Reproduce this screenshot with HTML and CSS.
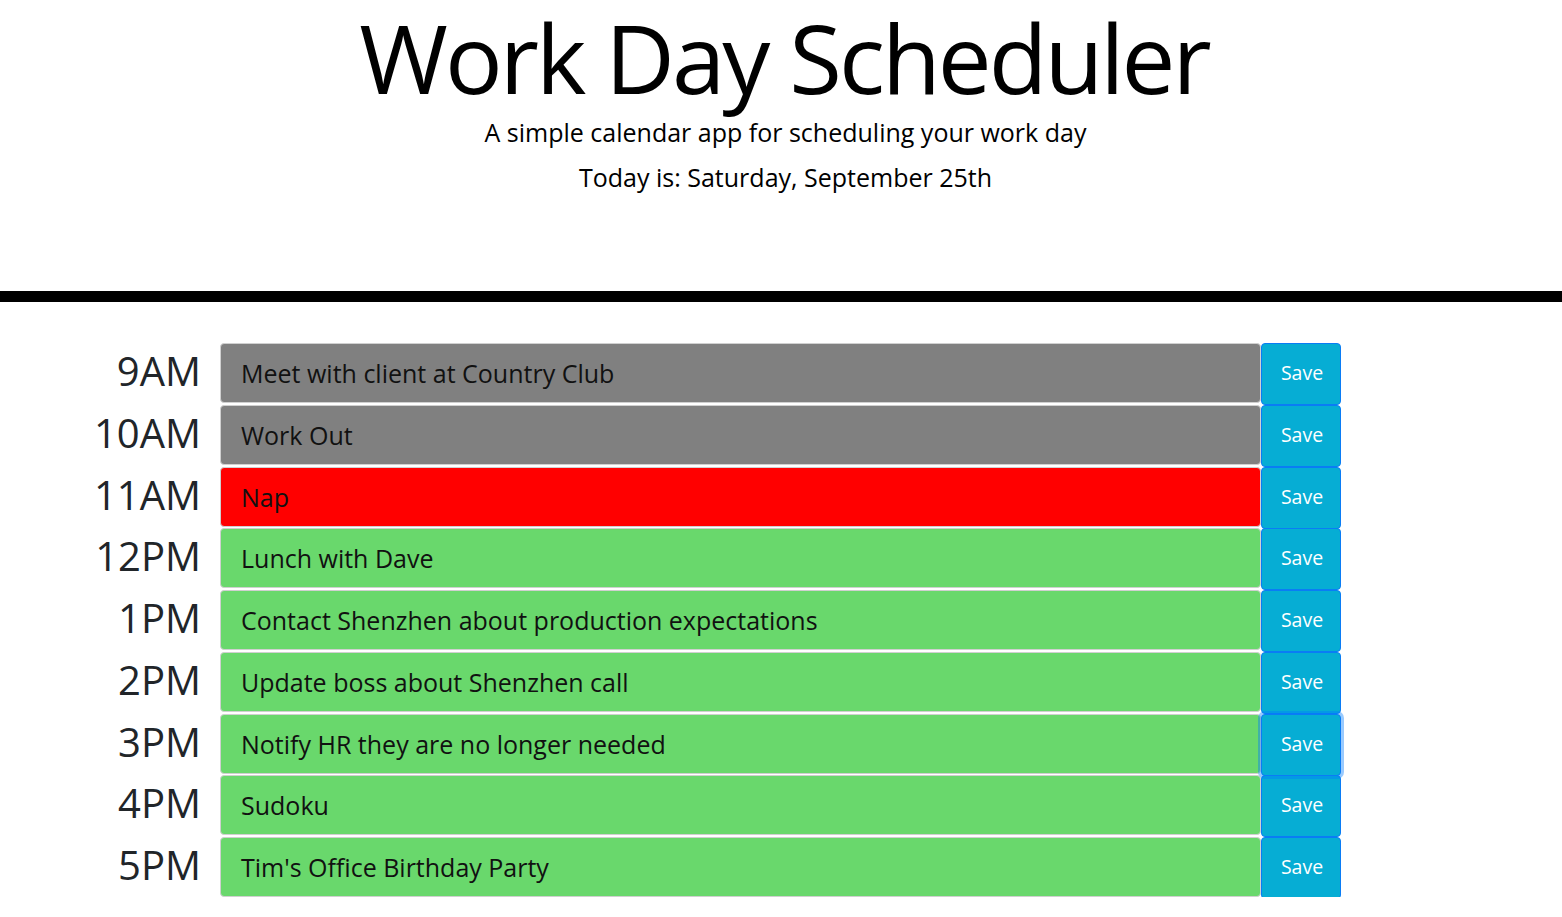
FILE: index.html
```html
<!DOCTYPE html>
<html lang="en">
<head>
<meta charset="utf-8">
<title>Work Day Scheduler</title>
<link rel="stylesheet" href="styles.css">
</head>
<body>
<header class="jumbotron">
  <h1 class="title">Work Day Scheduler</h1>
  <p class="lead">A simple calendar app for scheduling your work day</p>
  <p class="lead today">Today is: Saturday, September 25th</p>
</header>
<main class="container">
  <div class="time-block">
    <div class="hour">9AM</div>
    <div class="description past">Meet with client at Country Club</div>
    <button class="save-btn">Save</button>
  </div>
  <div class="time-block">
    <div class="hour">10AM</div>
    <div class="description past">Work Out</div>
    <button class="save-btn">Save</button>
  </div>
  <div class="time-block">
    <div class="hour">11AM</div>
    <div class="description present">Nap</div>
    <button class="save-btn">Save</button>
  </div>
  <div class="time-block">
    <div class="hour">12PM</div>
    <div class="description future">Lunch with Dave</div>
    <button class="save-btn">Save</button>
  </div>
  <div class="time-block">
    <div class="hour">1PM</div>
    <div class="description future">Contact Shenzhen about production expectations</div>
    <button class="save-btn">Save</button>
  </div>
  <div class="time-block">
    <div class="hour">2PM</div>
    <div class="description future">Update boss about Shenzhen call</div>
    <button class="save-btn">Save</button>
  </div>
  <div class="time-block">
    <div class="hour">3PM</div>
    <div class="description future">Notify HR they are no longer needed</div>
    <button class="save-btn focused">Save</button>
  </div>
  <div class="time-block">
    <div class="hour">4PM</div>
    <div class="description future">Sudoku</div>
    <button class="save-btn">Save</button>
  </div>
  <div class="time-block">
    <div class="hour">5PM</div>
    <div class="description future">Tim's Office Birthday Party</div>
    <button class="save-btn">Save</button>
  </div>
</main>
</body>
</html>
```
FILE: styles.css
```css
html, body {
  margin: 0;
  padding: 0;
  background: #fff;
  font-family: "Open Sans", "DejaVu Sans", sans-serif;
  color: #212529;
}

.jumbotron {
  text-align: center;
  height: 291px;
  padding-left: 9px;
  border-bottom: 11px solid #000;
  box-sizing: content-box;
}

.title {
  margin: 0;
  padding-top: 4px;
  font-size: 96px;
  font-weight: 400;
  letter-spacing: -3px;
  text-indent: -3px;
  line-height: 106px;
  color: #000;
}

.lead {
  margin: 0;
  font-size: 25px;
  font-weight: 400;
  line-height: 45px;
  color: #000;
}

.container {
  padding-top: 41px;
  display: flex;
  flex-direction: column;
  gap: 1.75px;
}

.time-block {
  display: grid;
  grid-template-columns: 220px 1041px 80px;
  height: 60px;
  align-items: start;
}

.hour {
  text-align: right;
  padding-right: 19px;
  font-size: 40px;
  line-height: 56px;
  color: #212529;
}

.description {
  box-sizing: border-box;
  height: 60px;
  border: 1px solid #d0d0d0;
  border-radius: 4px;
  padding: 0 20px;
  font-size: 25px;
  line-height: 58px;
  color: #111;
  white-space: nowrap;
  overflow: hidden;
}

.past { background: #808080; }
.present { background: #ff0000; }
.future { background: #69d86c; }

.save-btn {
  box-sizing: border-box;
  height: 62px;
  margin: 0;
  border: 1px solid #0a7cf5;
  border-radius: 4px;
  background: #06add4;
  color: #fff;
  font-family: "Open Sans", "DejaVu Sans", sans-serif;
  font-size: 19.5px;
  padding: 0 0 3px 2px;
}

.save-btn.focused {
  box-shadow: 0 0 0 3px rgba(0, 123, 255, 0.4);
  position: relative;
}
```
